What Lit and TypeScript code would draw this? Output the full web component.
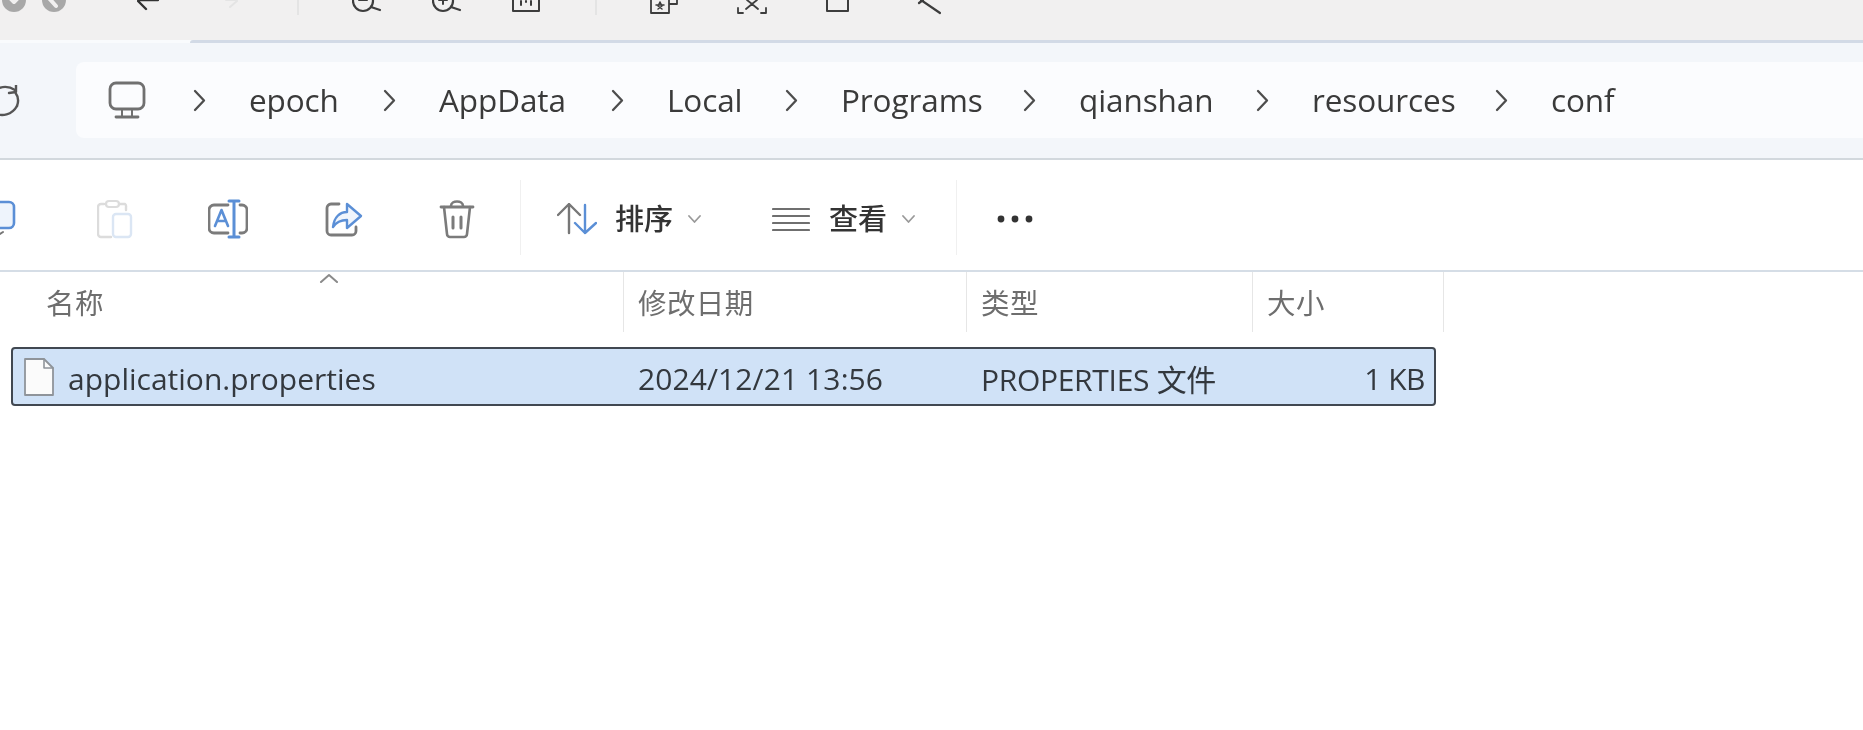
import { LitElement, html, css, svg } from "lit";
import { customElement } from "lit/decorators.js";

const ic = (w: number, h: number, body: unknown, cls = "") =>
  html`<svg class="ic ${cls}" width=${w} height=${h} viewBox="0 0 ${w} ${h}" fill="none" stroke-linecap="round" stroke-linejoin="round">${body}</svg>`;

const topIcons = [
  ic(24, 40, svg`<circle cx="12" cy="0" r="12" fill="#a8a8a8"/><path d="M8-2 12 2M16-2 12 2" stroke="#f1f0f0" stroke-width="4"/>`),
  ic(24, 40, svg`<circle cx="12" cy="0" r="12" fill="#a8a8a8"/><path d="M5-4 14 6" stroke="#f1f0f0" stroke-width="4"/>`),
  ic(22, 40, svg`<path d="M21 0H2M1 1 9 9" stroke="#333" stroke-width="2.4"/>`),
  ic(14, 40, svg`<path d="M1 0H12M12 1 5 7" stroke="#e4e4e4" stroke-width="2"/>`),
  html`<span class="tsep"></span>`,
  ic(30, 40, svg`<circle cx="11" cy="1" r="10" stroke="#3d3d3d" stroke-width="2.2"/><path d="M7 0H15" stroke="#3d3d3d" stroke-width="2"/><path d="M19 7 28 10" stroke="#3d3d3d" stroke-width="2.2"/>`),
  ic(30, 40, svg`<circle cx="11" cy="1" r="10" stroke="#3d3d3d" stroke-width="2.2"/><path d="M7 0H15M11-4V4" stroke="#3d3d3d" stroke-width="2"/><path d="M19 7 28 10" stroke="#3d3d3d" stroke-width="2.2"/>`),
  ic(28, 40, svg`<path d="M1-2V11H27V-2" stroke="#3d3d3d" stroke-width="2"/><path d="M9 1V5M14 1V2M19 1V5" stroke="#3d3d3d" stroke-width="2"/>`),
  html`<span class="tsep"></span>`,
  ic(28, 40, svg`<path d="M1-2V13H19V-2M19 4H27V-2" stroke="#3d3d3d" stroke-width="1.8"/><path d="M10 2 12 6 8 9M10 2 8 6 12 9M6 5H14" stroke="#3d3d3d" stroke-width="1.5"/>`),
  ic(30, 40, svg`<path d="M1 8V13H6M24 13H29V8" stroke="#3d3d3d" stroke-width="1.8"/><path d="M10 0 15 4 20 0M15 4 9 9M15 4 21 9" stroke="#3d3d3d" stroke-width="1.8"/>`),
  ic(23, 40, svg`<path d="M1-2V11H22V-2" stroke="#3d3d3d" stroke-width="2"/>`),
  ic(24, 40, svg`<path d="M4 0 23 13M2 3 6 0" stroke="#3d3d3d" stroke-width="2.2"/>`),
];

const chev = ic(13, 23, svg`<path d="M2 2 11 11.5 2 21" stroke="#4d4d4d" stroke-width="2.3"/>`);
const crumbs = ["epoch", "AppData", "Local", "Programs", "qianshan", "resources", "conf"];

const G = "#7b7b7b";
const B = "#5b8fd6";
const downChev = ic(13, 8, svg`<path d="M1 1 6.5 7 12 1" stroke="#9a9a9a" stroke-width="1.8"/>`);

@customElement("app-root")
export class AppRoot extends LitElement {
  static styles = css`
    :host {
      display: block;
      width: 1863px;
      height: 730px;
      overflow: hidden;
      background: #fff;
      font-family: "Open Sans", "Noto Sans CJK SC", sans-serif;
      color: #3a3a3a;
      filter: blur(0.6px);
    }
    .ic { display: block; flex: none; overflow: hidden; }
    .top {
      height: 40px;
      background: #f1f0f0;
      display: grid;
      grid-template-columns: 40px 95px 88px 72px 55px 80px 80px 83px 55px 87px 89px 91px auto;
      padding-left: 2px;
      overflow: hidden;
    }
    .tsep { display: block; width: 2px; height: 15px; background: #e4e4e4; }
    .rule { height: 3px; background: #f9fbfd; display: flex; justify-content: flex-end; }
    .rule i { display: block; width: 1673px; background: #d2dae6; border-radius: 3px 0 0 0; }
    .addr {
      height: 117px;
      box-sizing: border-box;
      background: #f3f6fa;
      border-bottom: 2px solid #d2d8dd;
      padding: 19px 0 0 0;
      display: flex;
      align-items: flex-start;
    }
    .refresh { margin-top: 23px; width: 76px; }
    .crumbs {
      flex: 1;
      height: 76px;
      background: #fbfcfe;
      border-radius: 8px 0 0 8px;
      display: grid;
      grid-template-columns: 85px 56px 134px 56px 172px 56px 118px 56px 182px 56px 177px 56px 183px 56px auto;
      align-items: center;
      padding-left: 32px;
    }
    .crumb {
      font-size: 31.5px;
      letter-spacing: -0.1px;
      line-height: 40px;
      white-space: nowrap;
    }
    .tools {
      height: 112px;
      box-sizing: border-box;
      border-bottom: 2px solid #d5dde6;
      display: grid;
      grid-template-columns: 97px 111px 117px 114px 81px 37px 58px 73px 84px 57px 73px 54px 41px auto;
      align-items: center;
      padding-top: 8px;
    }
    .tools > * { justify-self: start; }
    .tsp { display: block; width: 1px; height: 75px; background: #f0f0f0; align-self: start; margin-top: 12px; }
    .tlabel { font-size: 29px; line-height: 36px; color: #333; font-weight: 500; }
    .head, .row {
      display: grid;
      grid-template-columns: 624px 343px 286px 191px;
    }
    .head { height: 60px; position: relative; }
    .hc {
      display: flex;
      align-items: center;
      padding: 0 0 2px 14px;
      border-right: 1px solid #e6e6e6;
      font-size: 28.5px;
      color: #6e6e6e;
      letter-spacing: 0.4px;
      box-sizing: border-box;
    }
    .hc.name { padding-left: 46px; }
    .caret { position: absolute; left: 319px; top: 1px; }
    .row {
      margin: 15px 0 0 11px;
      width: 1425px;
      height: 59px;
      box-sizing: border-box;
      background: #d0e2f7;
      border: 2px solid #414851;
      border-radius: 4px;
      grid-template-columns: 611px 343px 286px auto;
      align-items: center;
      font-size: 30px;
      color: #33383e;
    }
    .cell { display: flex; align-items: center; padding-left: 14px; white-space: nowrap; }
    .cell span.t, .cell.txt { padding-top: 3px; }
    .cell.file { padding-left: 10px; gap: 13px; }
    .cell.date { letter-spacing: 0.1px; }
    .cell.type { letter-spacing: -0.3px; }
    .cell.size { justify-content: flex-end; padding-right: 9px; padding-left: 0; letter-spacing: -0.5px; }
  `;

  render() {
    return html`
      <div class="top">${topIcons}</div>
      <div class="rule"><i></i></div>
      <div class="addr">
        <div class="refresh">
          ${ic(20, 32, svg`<path d="M15 5C6 -1 -8 2 -11 14M17 21C12 30 2 32 -6 28" stroke="#555" stroke-width="2.4"/><path d="M17 21C19 16 18 11 15 7M16 0 16 7 9 8" stroke="#555" stroke-width="2.4"/>`)}
        </div>
        <div class="crumbs">
          ${ic(38, 38, svg`<rect x="2" y="2" width="34" height="26" rx="6" stroke="#707070" stroke-width="2.8"/><path d="M14 28V35M24 28V35" stroke="#707070" stroke-width="2"/><path d="M8 36H30" stroke="#707070" stroke-width="2.8"/>`)}
          ${crumbs.map((c) => html`${chev}<span class="crumb">${c}</span>`)}
        </div>
      </div>
      <div class="tools">
        ${ic(16, 40, svg`<path d="M-4 3H9A5 5 0 0 1 14 8V24A5 5 0 0 1 9 29H-4" stroke="${B}" stroke-width="2.6" fill="#eef4fc"/><path d="M0 35 3 33" stroke="#777" stroke-width="2"/>`)}
        ${ic(36, 40, svg`<path d="M7 5H4A3 3 0 0 0 1 8V35A3 3 0 0 0 4 38H14M22 5H28A3 3 0 0 1 29 8V11" stroke="#dcdcdc" stroke-width="2.4"/><rect x="9" y="2" width="13" height="6" rx="3" stroke="#dcdcdc" stroke-width="2.2"/><rect x="16" y="15" width="18" height="23" rx="3" stroke="#dbe6f4" stroke-width="2.4"/>`)}
        ${ic(40, 40, svg`<path d="M20 6H6A5 5 0 0 0 1 11V29A5 5 0 0 0 6 34H20M32 6H34A5 5 0 0 1 39 11V29A5 5 0 0 1 34 34H32" stroke="${G}" stroke-width="2.8"/><path d="M7 27 13.5 11 20 27M9.5 22H17.5" stroke="${B}" stroke-width="2.6"/><path d="M26 2V38M21 2H31M21 38H31" stroke="${B}" stroke-width="3"/>`)}
        ${ic(38, 40, svg`<path d="M14 5H6A4 4 0 0 0 2 9V32A4 4 0 0 0 6 36H27A4 4 0 0 0 31 32V28" stroke="${G}" stroke-width="2.8"/><path d="M8 28C9 18 15 13 22 13V5L36 17 22 29V21C17 21 12 22 8 28Z" stroke="${B}" stroke-width="2.4" fill="#f0f5fc"/>`)}
        ${ic(36, 40, svg`<path d="M2 8H34" stroke="${G}" stroke-width="2.8"/><path d="M12 7C12 1 24 1 24 7" stroke="${G}" stroke-width="2.6"/><path d="M5 8 8 35A3 3 0 0 0 11 38H25A3 3 0 0 0 28 35L31 8" stroke="${G}" stroke-width="2.6"/><path d="M14 18V29M22 18V29" stroke="${G}" stroke-width="3"/>`)}
        <span class="tsp"></span>
        ${ic(40, 32, svg`<path d="M12 1V30M1 12 12 1 23 12" stroke="#777" stroke-width="2.4"/><path d="M28 2V30M18 20 28 30 39 20" stroke="${B}" stroke-width="2.4"/>`)}
        <span class="tlabel">排序</span>
        ${downChev}
        ${ic(38, 25, svg`<path d="M1 2H37M1 9H37M1 16H37M1 23H37" stroke="#6f6f6f" stroke-width="2.2"/>`)}
        <span class="tlabel">查看</span>
        ${downChev}
        <span class="tsp"></span>
        ${ic(36, 8, svg`<circle cx="4" cy="4" r="3.4" fill="#333"/><circle cx="18" cy="4" r="3.4" fill="#333"/><circle cx="32" cy="4" r="3.4" fill="#333"/>`)}
      </div>
      <div class="head">
        <div class="hc name">名称</div>
        <div class="hc">修改日期</div>
        <div class="hc">类型</div>
        <div class="hc">大小</div>
        ${ic(20, 10, svg`<path d="M2 9 10 2 18 9" stroke="#8a8a8a" stroke-width="2"/>`, "caret")}
      </div>
      <div class="row">
        <div class="cell file">
          ${ic(32, 40, svg`<path d="M2 2H21L30 11V38H2Z" fill="#fbfbfb" stroke="#8f949a" stroke-width="1.8"/><path d="M21 2V11H30" stroke="#8f949a" stroke-width="1.6"/>`)}
          <span class="t">application.properties</span>
        </div>
        <div class="cell txt date">2024/12/21 13:56</div>
        <div class="cell txt type">PROPERTIES 文件</div>
        <div class="cell txt size">1 KB</div>
      </div>
    `;
  }
}
